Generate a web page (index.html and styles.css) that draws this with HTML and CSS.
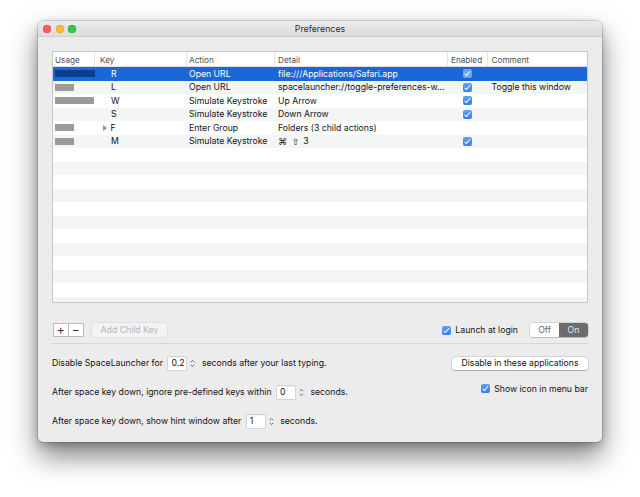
FILE: index.html
```html
<!DOCTYPE html>
<html>
<head>
<meta charset="utf-8">
<title>Preferences</title>
<link rel="stylesheet" href="styles.css">
</head>
<body>
<div class="window">
  <div class="titlebar">
    <div class="lights"><span class="light red"></span><span class="light yellow"></span><span class="light green"></span></div>
    <div class="title">Preferences</div>
  </div>
  <div class="content">
    <div class="table">
      <div class="row head">
        <div class="cell c-usage">Usage</div>
        <div class="cell c-key">Key</div>
        <div class="cell c-action">Action</div>
        <div class="cell c-detail">Detail</div>
        <div class="cell c-enabled">Enabled</div>
        <div class="cell c-comment">Comment</div>
      </div>
      <div class="body">
        <div class="row selected">
          <div class="cell c-usage"><span class="bar" style="width:40px"></span></div>
          <div class="cell c-key"><span class="key">R</span></div>
          <div class="cell c-action">Open URL</div>
          <div class="cell c-detail">file:///Applications/Safari.app</div>
          <div class="cell c-enabled"><span class="check"></span></div>
          <div class="cell c-comment"></div>
        </div>
        <div class="row">
          <div class="cell c-usage"><span class="bar" style="width:19px"></span></div>
          <div class="cell c-key"><span class="key">L</span></div>
          <div class="cell c-action">Open URL</div>
          <div class="cell c-detail">spacelauncher://toggle-preferences-w…</div>
          <div class="cell c-enabled"><span class="check"></span></div>
          <div class="cell c-comment">Toggle this window</div>
        </div>
        <div class="row">
          <div class="cell c-usage"><span class="bar" style="width:39px"></span></div>
          <div class="cell c-key"><span class="key">W</span></div>
          <div class="cell c-action">Simulate Keystroke</div>
          <div class="cell c-detail">Up Arrow</div>
          <div class="cell c-enabled"><span class="check"></span></div>
          <div class="cell c-comment"></div>
        </div>
        <div class="row">
          <div class="cell c-usage"></div>
          <div class="cell c-key"><span class="key">S</span></div>
          <div class="cell c-action">Simulate Keystroke</div>
          <div class="cell c-detail">Down Arrow</div>
          <div class="cell c-enabled"><span class="check"></span></div>
          <div class="cell c-comment"></div>
        </div>
        <div class="row">
          <div class="cell c-usage"><span class="bar" style="width:19px"></span></div>
          <div class="cell c-key"><span class="disclosure"></span><span class="key">F</span></div>
          <div class="cell c-action">Enter Group</div>
          <div class="cell c-detail">Folders (3 child actions)</div>
          <div class="cell c-enabled"></div>
          <div class="cell c-comment"></div>
        </div>
        <div class="row">
          <div class="cell c-usage"><span class="bar" style="width:19px"></span></div>
          <div class="cell c-key"><span class="key">M</span></div>
          <div class="cell c-action">Simulate Keystroke</div>
          <div class="cell c-detail"><span class="sym">⌘</span><span class="sym">⇧</span>3</div>
          <div class="cell c-enabled"><span class="check"></span></div>
          <div class="cell c-comment"></div>
        </div>
        <div class="row empty"></div>
        <div class="row empty"></div>
        <div class="row empty"></div>
        <div class="row empty"></div>
        <div class="row empty"></div>
        <div class="row empty"></div>
        <div class="row empty"></div>
        <div class="row empty"></div>
        <div class="row empty"></div>
        <div class="row empty"></div>
        <div class="row empty"></div>
        <div class="row empty"></div>
        <div class="row empty"></div>
      </div>
    </div>

    <div class="toolbar">
      <div class="plusminus">
        <span class="pm">+</span><span class="pm">−</span>
      </div>
      <span class="btn disabled">Add Child Key</span>
      <span class="spacer"></span>
      <label class="checkline"><span class="check"></span>Launch at login</label>
      <div class="segmented"><span class="seg off">Off</span><span class="seg on">On</span></div>
    </div>

    <div class="sep"></div>

    <div class="setting">
      <div class="line">Disable SpaceLauncher for <span class="field">0.2</span><span class="stepper"><svg width="5" height="9" viewBox="0 0 5 9"><path d="M0.8 3.2 L2.5 1.4 L4.2 3.2 M0.8 5.8 L2.5 7.6 L4.2 5.8" fill="none" stroke="#6f6f6f" stroke-width="1"/></svg></span> seconds after your last typing.</div>
      <span class="btn">Disable in these applications</span>
    </div>
    <div class="setting">
      <div class="line">After space key down, ignore pre-defined keys within <span class="field">0</span><span class="stepper"><svg width="5" height="9" viewBox="0 0 5 9"><path d="M0.8 3.2 L2.5 1.4 L4.2 3.2 M0.8 5.8 L2.5 7.6 L4.2 5.8" fill="none" stroke="#6f6f6f" stroke-width="1"/></svg></span> seconds.</div>
      <label class="checkline raised"><span class="check"></span>Show icon in menu bar</label>
    </div>
    <div class="setting">
      <div class="line">After space key down, show hint window after <span class="field">1</span><span class="stepper"><svg width="5" height="9" viewBox="0 0 5 9"><path d="M0.8 3.2 L2.5 1.4 L4.2 3.2 M0.8 5.8 L2.5 7.6 L4.2 5.8" fill="none" stroke="#6f6f6f" stroke-width="1"/></svg></span> seconds.</div>
    </div>
  </div>
</div>
</body>
</html>
```
FILE: styles.css
```css
* { box-sizing: border-box; }
html, body { margin: 0; background: #ffffff; }
html { height: 497px; overflow: hidden; }
body {
  height: 497px;
  padding: 21px 0 55px 38px;
  font-family: "Inter", "DejaVu Sans", sans-serif;
  font-size: 8.7px;
  color: #141414;
}
.window {
  width: 564px;
  height: 421px;
  background: #ececec;
  border-radius: 5px;
  box-shadow: 0 0 0 0.5px rgba(0,0,0,0.25), 0 14px 28px rgba(0,0,0,0.5), 0 3px 8px rgba(0,0,0,0.2);
  overflow: hidden;
  display: flex;
  flex-direction: column;
}
.titlebar {
  height: 16px;
  flex: none;
  background: linear-gradient(#ebebeb, #dcdcdc);
  border-bottom: 1px solid #cfcfcf;
  display: flex;
  align-items: center;
  position: relative;
}
.lights { display: flex; gap: 4.6px; padding-left: 5px; }
.light { width: 8px; height: 8px; border-radius: 50%; }
.red { background: #fc605c; box-shadow: inset 0 0 0 0.5px #de4a45; }
.yellow { background: #fdbc40; box-shadow: inset 0 0 0 0.5px #dea236; }
.green { background: #34c84a; box-shadow: inset 0 0 0 0.5px #27aa35; }
.title {
  position: absolute; left: 0; right: 0; text-align: center;
  font-size: 8.8px; color: #2e2e2e;
}
.content {
  flex: 1;
  padding: 14px 14px 14px 14px;
  display: flex;
  flex-direction: column;
}
.table {
  height: 252px;
  background: #fff;
  border: 1px solid #c6c6c6;
  display: flex;
  flex-direction: column;
  overflow: hidden;
}
.row {
  display: grid;
  grid-template-columns: 42px 91.5px 88.5px 173px 39.5px 1fr;
  height: 13.5px;
  align-items: center;
  white-space: nowrap;
}
.body .row:nth-child(even) { background: #f4f5f5; }
.row.selected { background: #1a67d8; color: #fff; }
.row.head {
  height: 15px;
  border-bottom: 1px solid #dedede;
  color: #505050;
  font-size: 8.2px;
}
.row.head .cell { border-right: 1px solid #e4e4e4; height: 15px; display: flex; align-items: center; }
.row.head .cell:last-child { border-right: none; }
.cell { overflow: hidden; text-overflow: clip; padding-left: 3px; display: flex; align-items: center; height: 100%; }
.row.head .c-usage { padding-left: 2px; }
.row.head .c-key { padding-left: 5px; }
.c-usage { padding-left: 2px; }
.c-action { padding-left: 2.5px; }
.c-enabled { justify-content: center; padding-left: 0; }
.row.head .c-enabled { justify-content: flex-start; padding-left: 3px; }
.c-comment { padding-left: 4px; }
.bar { display: block; height: 7px; background: #9b9b9b; }
.selected .bar { background: #0d3e8c; }
.c-key { padding-left: 8px; }
.disclosure {
  width: 0; height: 0;
  border-left: 4px solid #8f8f8f;
  border-top: 3px solid transparent;
  border-bottom: 3px solid transparent;
  margin-left: -0.5px;
  margin-right: 4px;
}
.key { margin-left: 8px; }
.disclosure + .key { margin-left: 0; }
.sym { font-family: "DejaVu Sans", sans-serif; font-size: 9.4px; margin-right: 4px; color: #2a2a2a; }
.check {
  display: inline-block;
  width: 9px; height: 9px;
  border-radius: 2px;
  background: linear-gradient(#5ea3f8, #2f7ef1);
  position: relative;
  flex: none;
}
.check::after {
  content: "";
  position: absolute;
  left: 3px; top: 1px;
  width: 2px; height: 4.5px;
  border: solid #fff;
  border-width: 0 1.3px 1.3px 0;
  transform: rotate(40deg);
}
.selected .check { background: #69a6f2; }

.toolbar {
  margin-top: 20px;
  height: 14px;
  display: flex;
  align-items: center;
}
.plusminus { display: flex; margin-left: 1px; }
.pm {
  width: 15.5px; height: 14px;
  background: #fff;
  border: 1px solid #bdbdbd;
  display: flex; align-items: center; justify-content: center;
  font-size: 12px; color: #333; line-height: 1;
}
.pm + .pm { border-left: none; }
.btn {
  height: 13px;
  padding: 0 7px;
  background: #fff;
  border-radius: 3px;
  box-shadow: 0 0 0 0.5px rgba(0,0,0,0.18), 0 0.5px 1px rgba(0,0,0,0.2);
  display: inline-flex; align-items: center;
  white-space: nowrap;
}
.btn.disabled {
  margin-left: 8px;
  width: 75px;
  height: 14px;
  justify-content: center;
  background: #f3f3f3;
  color: #b5b5b5;
  box-shadow: 0 0 0 0.5px rgba(0,0,0,0.1);
}
.spacer { flex: 1; }
.checkline { display: flex; align-items: center; gap: 4px; white-space: nowrap; }
.segmented {
  margin-left: 12px;
  display: flex;
  height: 14px;
  border-radius: 3px;
  overflow: hidden;
  box-shadow: 0 0 0 0.5px rgba(0,0,0,0.18), 0 0.5px 1px rgba(0,0,0,0.15);
}
.seg { width: 29px; display: flex; align-items: center; justify-content: center; }
.seg.off { background: #fff; color: #666; }
.seg.on { background: #6c6c6c; color: #e8e8e8; }
.sep { margin-top: 6px; height: 1px; background: #d6d6d6; }
.setting {
  height: 14px;
  margin-top: 15px;
  display: flex;
  align-items: center;
  justify-content: space-between;
}
.sep + .setting { margin-top: 12px; }
.line { display: flex; align-items: center; white-space: pre; }
.field {
  width: 18px; height: 13px;
  margin-left: 3px;
  background: #fff;
  box-shadow: 0 0 0 0.5px rgba(0,0,0,0.2), inset 0 0.5px 0 rgba(0,0,0,0.1);
  padding-left: 3px;
  display: flex; align-items: center;
}
.stepper { display: flex; margin-left: 4px; margin-right: 4px; }
.setting .btn { width: 136px; justify-content: center; }
.raised { margin-top: -7px; }
```
